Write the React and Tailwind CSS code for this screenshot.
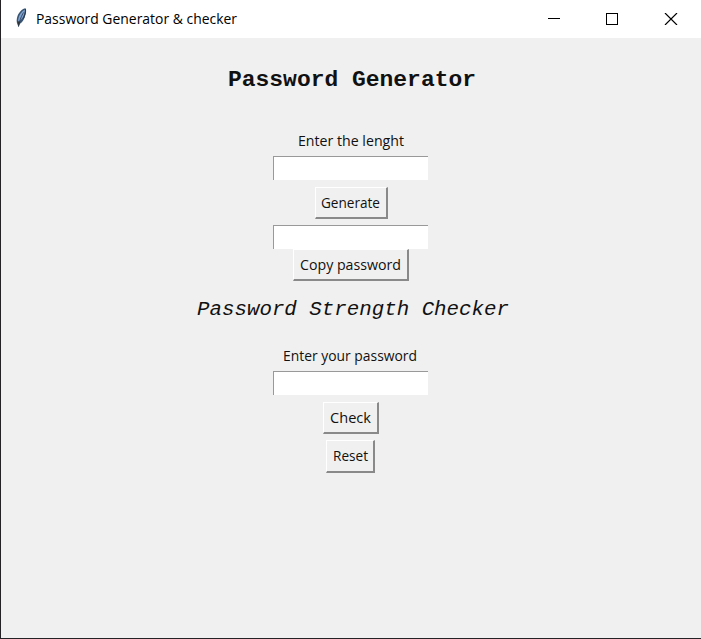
import React from "react";

function Feather() {
  return (
    <svg width="14" height="20" viewBox="0 0 14 20" className="block">
      <path d="M11.500 .3C8.500 .8 5 4 3.500 8C2.500 11 2.300 14 3.500 16.500L4.500 19L5.800 16C9 14 10.300 11 11.200 7.500C12.200 5 12.600 1.500 11.500 .3Z" fill="#395574" />
      <path d="M11 1.500C7.500 3.500 5 7 4.300 11L4 14C7.500 12 10.500 8 11 1.500Z" fill="#80a4d1" />
      <path d="M11.300 1C12 4 10.500 8 9.500 10.500" fill="none" stroke="#26364a" />
      <path d="M9.500 4.500C7.500 8 6 11 4.500 18.500" fill="none" stroke="#2b3f5c" strokeWidth=".9" />
      <path d="M3.500 13L4.500 18.500L6 14" fill="#30343b" />
    </svg>
  );
}

function Label({ text, width, className = "" }) {
  return (
    <svg width={width} height="22" className={`block overflow-visible ${className}`}>
      <text x="0" y="16" textLength={width} lengthAdjust="spacingAndGlyphs" fontSize="15" fill="currentColor" fontFamily="'Open Sans', 'Noto Sans', sans-serif">{text}</text>
    </svg>
  );
}

function Heading({ text, width, size, className = "" }) {
  return (
    <svg width={width} height="24" className={`block overflow-visible ${className}`}>
      <text x="0" y="17" textLength={width} lengthAdjust="spacingAndGlyphs" fontSize={size} fill="currentColor" fontFamily="'Courier New', 'Liberation Mono', monospace">{text}</text>
    </svg>
  );
}

function Entry({ className = "" }) {
  return <input aria-label="Entry" className={`mr-px block h-6 w-[155px] shrink-0 rounded-none border-t border-l border-t-[#999] border-l-[#999] bg-white px-1 outline-none ${className}`} />;
}

function Button({ text, width, className = "" }) {
  return (
    <button className={`flex h-8 shrink-0 items-center justify-center border-t border-l border-r-2 border-b-2 border-t-white border-l-white border-r-[#898989] border-b-[#898989] bg-[#f0f0f0] ${className}`}>
      <Label text={text} width={width} />
    </button>
  );
}

export default function App() {
  return (
    <main className="flex h-[639px] w-[701px] flex-col overflow-hidden border-b border-l border-[#252225] bg-[#f0f0f0] text-[#111]">
      <header className="flex h-[38px] shrink-0 items-start bg-white text-black">
        <div className="ml-[13px] mt-2"><Feather /></div>
        <Label text="Password Generator & checker" width={201} className="ml-2 mt-2" />
        <div className="ml-auto flex pt-[13px] pr-[23px]">
          <svg width="130" height="12" viewBox="0 0 130 12" fill="none" stroke="black" shapeRendering="crispEdges">
            <path d="M0 5.500H12M58.500.5H69.500V11.500H58.500Z" />
            <path d="M117 0L129 12M129 0L117 12" shapeRendering="auto" strokeWidth="1.200" />
          </svg>
        </div>
      </header>
      <section className="flex flex-col items-center">
        <h1 className="mt-[31px] h-6 pl-px font-bold"><Heading text="Password Generator" width={248} size={21.5} /></h1>
        <Label text="Enter the lenght" width={106} className="mt-[37px]" />
        <Entry className="mt-1" />
        <Button text="Generate" width={59} className="mt-[7px] w-[73px]" />
        <Entry className="mt-1.5" />
        <Button text="Copy password" width={101} className="w-[116px]" />
        <h2 className="mt-[17px] h-6 pl-[3px] italic"><Heading text="Password Strength Checker" width={312} size={19.5} /></h2>
        <Label text="Enter your password" width={134} className="mt-[23px] mr-0.5" />
        <Entry className="mt-1" />
        <Button text="Check" width={41} className="mt-[7px] w-14" />
        <Button text="Reset" width={35} className="mt-1.5 mr-px h-[33px] w-[49px]" />
      </section>
    </main>
  );
}
